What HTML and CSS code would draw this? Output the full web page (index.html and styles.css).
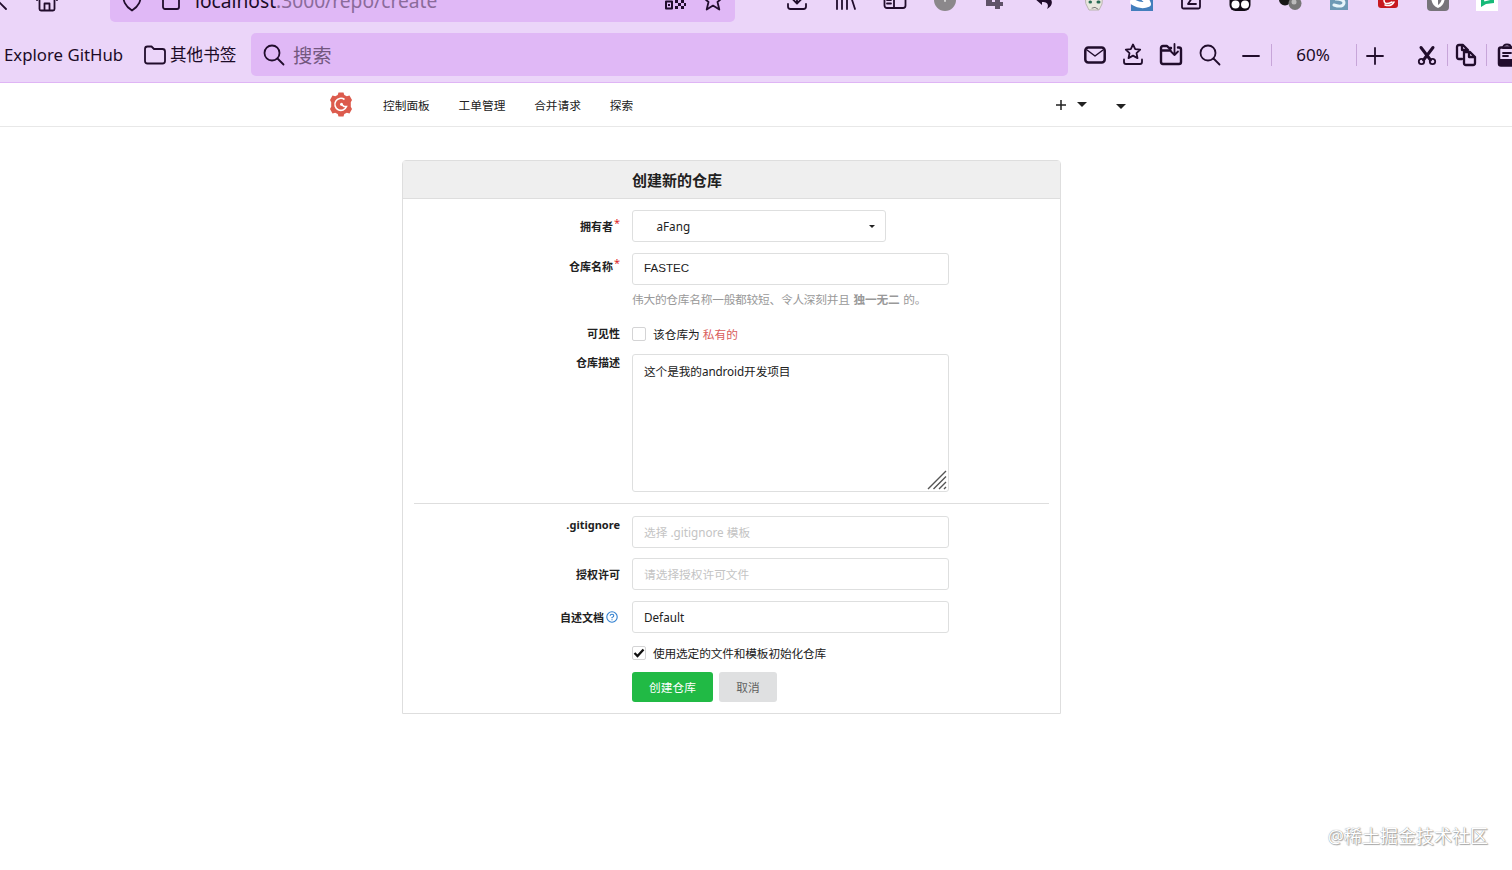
FILE: index.html
```html
<!DOCTYPE html>
<html lang="zh-CN">
<head>
    <meta charset="utf-8">
    <title>创建新的仓库</title>
    <link rel="stylesheet" href="styles.css">
</head>
<body>
    <div class="browser">
        <div class="address-row">
            <div class="nav-buttons">
                <svg class="icon back" viewBox="0 0 24 24"><path d="M12 3l-9 9 9 9"/></svg>
                <svg class="icon home" viewBox="0 0 24 24"><path d="M2 12L12 2l10 10M4.500 11v10q0 1.500 1.500 1.500h12q1.500 0 1.500-1.500V11M9.500 22v-6.500h5V22"/></svg>
            </div>
            <div class="url-bar">
                <svg class="icon shield" viewBox="0 0 24 24"><path d="M12 1l9 4c0 8-2 13-9 17.500C5 18 3 13 3 5z"/></svg>
                <svg class="icon page" viewBox="0 0 24 24"><rect x="4" y="2" width="16" height="19" rx="2"/></svg>
                <span class="url"><b>localhost</b>:3000/repo/create</span>
                <svg class="icon qr" viewBox="0 0 24 24"><path d="M3 13.500h6v7H3zM3 3h6v7H3zM15 3h6v7h-6z"/><path class="solid" d="M5 16h2v2H5zM12 12h3v3h-3zM18 12h3v3h-3zM15 15h3v3h-3zM21 15h2v3h-2zM12 18h3v3h-3zM18 18h3v3h-3zM11 6h2v4h-2z"/></svg>
                <svg class="icon" viewBox="0 0 24 24"><path d="M12 2l2.800 6.800 7.200.500-5.500 4.700 1.800 7.500L12 17.600l-6.300 3.900L7.500 14 2 9.300l7.200-.5z"/></svg>
            </div>
            <div class="extensions">
                <svg class="icon" viewBox="0 0 24 24"><path d="M12 1v14M6.500 10l5.500 5.500 5.500-5.500M3 16v2.500Q3 21 5.500 21h13q2.500 0 2.500-2.500V16"/></svg>
                <svg class="icon" viewBox="0 0 24 24"><path d="M3 3v18M8 3v18M13 3v18M15.500 4l5.500 17"/></svg>
                <svg class="icon" viewBox="0 0 24 24"><rect x="1.500" y="3" width="21" height="17" rx="2.500"/><path d="M11 3v17M4 12h4M4 15.500h4"/></svg>
                <svg class="icon" viewBox="0 0 24 24"><circle cx="12" cy="12" r="11" fill="#8b888b" stroke="none"/><path d="M12 11v2" stroke="#ddd"/></svg>
                <svg class="icon" viewBox="0 0 24 24"><path d="M4 3h6v11h3V3h5v11h3v4h-3v3h-5v-3H4z" fill="#5f5268" stroke="none"/></svg>
                <svg class="icon" viewBox="0 0 24 24"><path class="solid" d="M11 4v4c11 0 13 9 5 13 2-4 1-7-5-7v3l-8-7z"/></svg>
                <svg class="icon" viewBox="0 0 24 24"><path d="M5 2h18l-1 14-3 6H9l-3-6z" fill="#e9e8df" stroke="#b9b5b0" stroke-width="1"/><path d="M10 14h.5M18 14h1" stroke="#286b55" stroke-width="3"/><path d="M12 20q3-2 6 1" stroke="#777" stroke-width="1"/></svg>
                <svg class="icon" viewBox="0 0 24 24"><path d="M1 1h22v22H1z" fill="#427ebc" stroke="none"/><path d="M3 14q8 5 15 2-2-6-8-8" stroke="#fff" stroke-width="6"/></svg>
                <svg class="icon" viewBox="0 0 24 24"><rect x="3" y="3" width="18" height="17.500" rx="1.500"/><path d="M8 7h7l-6 9h8"/></svg>
                <svg class="icon" viewBox="0 0 24 24"><rect x="1.500" y="2" width="21" height="21" rx="6" fill="#100b14" stroke="none"/><circle cx="7.500" cy="16.500" r="4" fill="#fff" stroke="none"/><circle cx="17" cy="16.500" r="4" fill="#fff" stroke="none"/></svg>
                <svg class="icon" viewBox="0 0 24 24"><circle cx="7" cy="11.500" r="6" fill="#171717" stroke="none"/><circle cx="17" cy="15.500" r="6.500" fill="#777" stroke="none"/><circle cx="16" cy="14" r="2.500" fill="#bbb" stroke="none"/></svg>
                <svg class="icon" viewBox="0 0 24 24"><path d="M3 2h18v20H3z" fill="#6e9ab5" stroke="none"/><path d="M17 7Q8 5 9 11q8 0 8 4-1 5-10 2" stroke="#e7f5fa" stroke-width="3"/></svg>
                <svg class="icon" viewBox="0 0 24 24"><rect x="2" y="1" width="20" height="19" rx="3" fill="#c71920" stroke="none"/><path d="M17 9q-9-3-9 3t8 2M9 17q6 2 9-3" stroke="#fff" stroke-width="1.500"/></svg>
                <svg class="icon" viewBox="0 0 24 24"><rect x="1" y="1" width="22" height="22" rx="4" fill="#77747a" stroke="none"/><path d="M12 4l7 3c0 7-2 11-7 13-5-2-7-6-7-13z" fill="#fff" stroke="none"/><path d="M12 7v10c3-2 4-5 4-9z" fill="#77747a" stroke="none"/></svg>
                <svg class="icon" viewBox="0 0 24 24"><path d="M1 1h22v22H1z" fill="#fff" stroke="none"/><path d="M6 4h13v11l-8 1-5 3z" fill="#17b978" stroke="none"/><path d="M10 12.500l4-1" stroke="#fff"/></svg>
            </div>
        </div>
        <div class="bookmark-row">
            <span class="bookmark">Explore GitHub</span>
            <span class="bookmark folder">
                <svg class="icon" viewBox="0 0 24 24"><path d="M2 18V6q0-2.500 2.500-2.500h4L11 6h8.500Q22 6 22 8.500V18q0 2.500-2.500 2.500h-15Q2 20.500 2 18z"/></svg>
                其他书签
            </span>
            <div class="search-bar">
                <svg class="icon" viewBox="0 0 24 24"><circle cx="10" cy="10" r="7.500"/><path d="M15.500 15.500l6 6"/></svg>
                <span>搜索</span>
            </div>
            <div class="tools">
                <svg class="icon mail" viewBox="0 0 24 24"><rect x="2.300" y="4.500" width="19.400" height="15" rx="3" stroke-width="2.500"/><path d="M4 7l8 6 8-6" stroke-width="1.500"/></svg>
                <svg class="icon" viewBox="0 0 24 24"><path d="M12 1.500l2.200 4.600 5 .6-3.700 3.400 1 5-4.500-2.500-4.500 2.500 1-5L4.800 6.700l5-.6z"/><path d="M3 16.500V19q0 2 2 2h14q2 0 2-2v-2.500"/></svg>
                <svg class="icon" viewBox="0 0 24 24"><path d="M19 4.500h1q2 0 2 2V19q0 2-2 2H4q-2 0-2-2V5q0-2 2-2h4l2 2h2M2.500 7.500h9" stroke-width="2.400"/><path d="M15.500 1v11M12 8.500l3.500 3.500L19 8.500"/></svg>
                <svg class="icon" viewBox="0 0 24 24"><circle cx="10" cy="10" r="7.500"/><path d="M15.500 15.500l6 6"/></svg>
                <svg class="icon minus" viewBox="0 0 24 24"><path d="M4 13h16"/></svg>
                <i class="sep"></i>
                <span class="zoom">60%</span>
                <i class="sep"></i>
                <svg class="icon plus" viewBox="0 0 24 24"><path d="M4 13h16M12 5v16"/></svg>
                <svg class="icon cut" viewBox="0 0 24 24"><path d="M6 4.500L15.500 17M18 4.500L8.500 17" stroke-width="3"/><circle cx="6.500" cy="18.500" r="2.700"/><circle cx="17.500" cy="18.500" r="2.700"/></svg>
                <i class="sep"></i>
                <svg class="icon copy" viewBox="0 0 24 24"><path d="M8 16H5q-2 0-2-2V4q0-2 2-2h4l5 5M8 2v5h5" stroke-width="2.300"/><path d="M10 9h6l5 5v6q0 2-2 2h-7q-2 0-2-2zM15 9v5h5" stroke-width="2.300"/></svg>
                <i class="sep"></i>
                <svg class="icon paste" viewBox="0 0 24 24"><rect x="4" y="4.500" width="16" height="18" rx="2" stroke-width="2.500"/><path d="M4 16h16v6H4z" class="solid"/><path d="M8 5q0-3.500 4-3.500T16 5zM8 10h8M8 13h5"/></svg>
            </div>
        </div>
    </div>

    <nav class="navbar">
        <svg class="logo" viewBox="0 0 24 24">
            <path d="M9.500 0h5l.8 2.500 2.500 1.300 2.700-.8 2.500 4.500-1.200 2.200v4.600l1.200 2.200-2.500 4.500-2.700-.8-2.500 1.300-.8 2.500h-5l-.8-2.500-2.500-1.300-2.700.8L1 16.500l1.200-2.200V9.700L1 7.500 3.500 3l2.700.8 2.500-1.300z" fill="#dc5b4d"/>
            <path d="M15.500 7A6 6 0 1 0 17.500 14h-2.500L12 11.700" fill="none" stroke="#fff" stroke-width="1.600"/>
            <circle cx="12.500" cy="11.700" r="1.500" fill="#fff"/>
        </svg>
        <a>控制面板</a>
        <a>工单管理</a>
        <a>合并请求</a>
        <a>探索</a>
        <div class="nav-right">
            <svg class="add" viewBox="0 0 10 10"><path d="M0 5h10M5 0v10"/></svg>
            <i class="caret"></i>
            <i class="caret user"></i>
        </div>
    </nav>

    <form class="panel">
        <h3>创建新的仓库</h3>
        <div class="panel-body">
            <div class="row owner">
                <label>拥有者<sup>*</sup></label>
                <div class="field dropdown">aFang<i class="caret"></i></div>
            </div>
            <div class="row name">
                <label>仓库名称<sup>*</sup></label>
                <div class="field latin">FASTEC</div>
            </div>
            <p class="help">伟大的仓库名称一般都较短、令人深刻并且 <b>独一无二</b> 的。</p>
            <div class="row visibility">
                <label>可见性</label>
                <div class="check"><span class="box"></span>该仓库为 <em>私有的</em></div>
            </div>
            <div class="row description">
                <label>仓库描述</label>
                <div class="field area">这个是我的android开发项目
                    <svg class="grip" viewBox="0 0 20 20"><path d="M1 19L19 1M6.500 19L19 6.500M12 19l7-7M17 19l2-2"/></svg>
                </div>
            </div>
            <hr>
            <div class="row gitignore">
                <label>.gitignore</label>
                <div class="field placeholder">选择 .gitignore 模板</div>
            </div>
            <div class="row">
                <label>授权许可</label>
                <div class="field placeholder">请选择授权许可文件</div>
            </div>
            <div class="row">
                <label>自述文档<svg class="question" viewBox="0 0 12 12"><circle cx="6" cy="6" r="5.200"/><path d="M4.200 4.800Q4.200 3.200 6 3.200t1.800 1.500Q7.800 5.800 6 6.500v.7M6 8.200v1"/></svg></label>
                <div class="field">Default</div>
            </div>
            <div class="check init">
                <span class="box checked"><svg viewBox="0 0 12 12"><path d="M1.500 6l3 3 6-6.500"/></svg></span>使用选定的文件和模板初始化仓库
            </div>
            <div class="actions">
                <span class="button green">创建仓库</span>
                <span class="button">取消</span>
            </div>
        </div>
    </form>

    <div class="watermark">@稀土掘金技术社区</div>
</body>
</html>
```

FILE: styles.css
```css
* {
    box-sizing: border-box;
}
body {
    margin: 0;
    height: 870px;
    position: relative;
    overflow: hidden;
    background: #fff;
    color: #212121;
    font: 11.7px/16px "Noto Sans", "Noto Sans CJK SC", sans-serif;
}

/* browser chrome */
.browser {
    height: 83px;
    overflow: hidden;
    background: #ebd5f9;
    border-bottom: 1px solid #dfb5f5;
    color: #1c0b27;
}
.icon {
    width: 24px;
    height: 24px;
    flex: none;
    fill: none;
    stroke: #210d2c;
    stroke-width: 1.8;
    stroke-linecap: round;
    stroke-linejoin: round;
}
.icon .solid {
    fill: #210d2c;
    stroke: none;
}
.address-row {
    display: flex;
    height: 22px;
}
.address-row .icon {
    margin-top: -12px;
}
.nav-buttons {
    width: 110px;
    flex: none;
    display: flex;
}
.nav-buttons .back {
    margin-left: -6px;
}
.nav-buttons .home {
    margin-left: 17px;
}
.url-bar {
    display: flex;
    width: 625px;
    height: 22px;
    flex: none;
    padding-left: 10px;
    background: #e0b8f6;
    border-radius: 0 0 5px 5px;
}
.url-bar .page {
    margin-left: 15px;
}
.url {
    width: 469px;
    margin: -11px 0 0 12px;
    font-size: 19.2px;
    line-height: 24px;
    color: #8b6b9b;
}
.url b {
    font-weight: normal;
    color: #1c0b27;
}
.url-bar .qr {
    margin-right: 14px;
    margin-left: -1px;
    stroke-width: 2;
}
.extensions {
    display: grid;
    grid-template-columns: repeat(15, 49.3px);
    justify-items: center;
    margin-left: 37px;
    flex: none;
}
.bookmark-row {
    display: flex;
    align-items: center;
    height: 43px;
    margin-top: 11px;
}
.bookmark {
    display: flex;
    align-items: center;
    flex: none;
    width: 139px;
    padding-left: 4px;
    font-size: 16.8px;
    white-space: nowrap;
}
.bookmark.folder {
    width: 112px;
    gap: 3px;
    font-size: 16.6px;
}
.search-bar {
    display: flex;
    align-items: center;
    gap: 7px;
    width: 817px;
    height: 43px;
    flex: none;
    padding-left: 11px;
    background: #e0b8f6;
    border-radius: 5px;
    color: #73577f;
    font-size: 19.3px;
}
.search-bar span {
    padding-top: 2px;
}
.tools {
    display: flex;
    align-items: center;
    flex: none;
    gap: 14.2px;
    margin-left: 15px;
}
.tools .minus {
    margin-left: 3px;
}
.tools .sep {
    width: 1px;
    height: 22px;
    margin: 0 -6px;
    background: #c7a5d9;
}
.tools .zoom {
    width: 68px;
    padding-right: 2px;
    text-align: center;
    font-size: 17px;
}
.tools .plus {
    margin-left: -3px;
}
.tools .cut {
    margin-left: 14px;
}
.tools .copy {
    margin-left: -2px;
}

/* site navigation */
.navbar {
    display: flex;
    align-items: center;
    gap: 29px;
    height: 44px;
    padding-left: 329px;
    border-bottom: 1px solid #e8e8e8;
}
.logo {
    width: 24px;
    height: 25px;
}
.navbar a {
    margin-right: -.2px;
}
.navbar .logo + a {
    margin-left: 1px;
}
.nav-right {
    display: flex;
    align-items: center;
    margin-left: 394px;
}
.add {
    width: 10px;
    height: 10px;
    stroke: #212121;
    stroke-width: 1.5;
}
.caret {
    border: 5px solid transparent;
    border-top-color: #212121;
    border-bottom: 0;
    margin-left: 11px;
}
.caret.user {
    margin: 4px 0 0 29px;
}

/* repository form */
.panel {
    width: 659px;
    height: 554px;
    margin: 33px 0 0 402px;
    border: 1px solid #dedede;
    border-radius: 4px 4px 0 0;
}
.panel h3 {
    height: 38px;
    margin: 0;
    padding-left: 229px;
    background: #efefef;
    border-bottom: 1px solid #dedede;
    font-size: 15px;
    line-height: 38px;
}
.panel-body {
    padding: 11px 11px 0;
}
.row {
    display: grid;
    grid-template-columns: 206px 317px;
    column-gap: 12px;
    margin-bottom: 10.5px;
}
.row label {
    padding-top: 9px;
    text-align: right;
    font-size: 11px;
    font-weight: bold;
    white-space: nowrap;
}
.row sup {
    margin-left: 1px;
    color: #db2828;
    font-size: 11px;
    line-height: 0;
    font-weight: normal;
    vertical-align: 4px;
}
.field {
    height: 32px;
    padding: 7px 11px;
    border: 1px solid #dedfdf;
    border-radius: 3px;
}
.dropdown {
    display: flex;
    justify-content: space-between;
    align-items: center;
    width: 254px;
    padding: 0 10px 0 23.5px;
}
.dropdown .caret {
    border-width: 3.5px;
    border-bottom: 0;
}
.name label {
    padding-top: 6px;
}
.latin {
    padding-top: 6px;
    font-family: "Liberation Sans", sans-serif;
    font-size: 11.6px;
}
.help {
    margin: -4px 0 19px 218px;
    color: #999;
    letter-spacing: -.23px;
}
.help b {
    margin: 0 1px;
}
.visibility {
    margin-bottom: 12px;
}
.visibility label {
    padding: 0;
}
.check {
    display: flex;
    align-items: center;
    height: 16px;
    white-space: pre;
}
.check em {
    color: #d95c5c;
    font-style: normal;
}
.box {
    width: 14px;
    height: 14px;
    margin-right: 7px;
    border: 1px solid #d4d4d5;
    border-radius: 2px;
}
.box svg {
    display: block;
    width: 12px;
    height: 12px;
    fill: none;
    stroke: #111;
    stroke-width: 2.3;
}
.description label {
    padding-top: 1px;
}
.area {
    position: relative;
    height: 138px;
    padding-top: 8px;
    letter-spacing: -.1px;
}
.grip {
    position: absolute;
    right: 1px;
    bottom: 1px;
    width: 20px;
    height: 20px;
    stroke: #555;
    stroke-width: 1.4;
}
.panel hr {
    height: 1px;
    margin: 0 0 12px;
    border: 0;
    background: #dedede;
}
.gitignore label {
    padding-top: 1px;
}
.placeholder {
    color: #c4c4c4;
}
.question {
    width: 12px;
    height: 12px;
    margin: 0 2px -1px;
    fill: none;
    stroke: #2f7fd0;
    stroke-width: 1.1;
}
.init {
    margin: 12px 0 11px 218px;
    letter-spacing: -.15px;
    white-space: normal;
}
.actions {
    display: flex;
    gap: 6px;
    margin-left: 218px;
}
.button {
    width: 58px;
    height: 30px;
    border-radius: 3px;
    background: #dfe0e1;
    color: #606060;
    text-align: center;
    line-height: 31px;
}
.button.green {
    width: 81px;
    background: #21ba45;
    color: #fff;
}
.watermark {
    position: absolute;
    right: 24px;
    bottom: 22px;
    color: #fff;
    font-size: 18px;
    line-height: 24px;
    text-shadow: 0 0 1px #777, 1px 1px 1px #aaa;
}
```
